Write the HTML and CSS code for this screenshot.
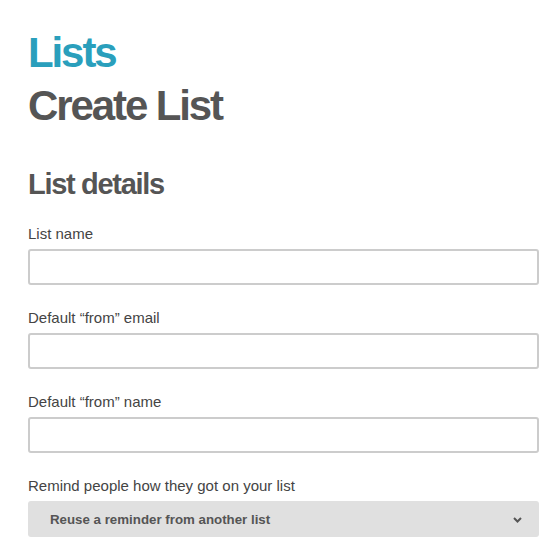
FILE: index.html
```html
<!DOCTYPE html>
<html>
<head>
<meta charset="utf-8">
<link rel="stylesheet" href="styles.css">
</head>
<body>
<main class="page">
  <header class="titles">
    <h1 class="crumb">Lists</h1>
    <h1 class="title">Create List</h1>
  </header>
  <h2 class="section">List details</h2>
  <form class="form">
    <div class="field">
      <label class="label">List name</label>
      <input class="input" type="text">
    </div>
    <div class="field">
      <label class="label">Default “from” email</label>
      <input class="input" type="text">
    </div>
    <div class="field">
      <label class="label">Default “from” name</label>
      <input class="input" type="text">
    </div>
    <div class="field">
      <label class="label">Remind people how they got on your list</label>
      <div class="select">
        <span class="select-text">Reuse a reminder from another list</span>
        <svg class="chev" width="9" height="6" viewBox="0 0 9 6"><path d="M1 1 L4.5 4.5 L8 1" fill="none" stroke="#555" stroke-width="2"/></svg>
      </div>
    </div>
  </form>
</main>
</body>
</html>
```

FILE: styles.css
```css
html, body {
  margin: 0;
  padding: 0;
  background: #fff;
}
body {
  font-family: "Liberation Sans", Arial, sans-serif;
  color: #444;
}
.page {
  padding: 26px 15px 0 28px;
}
.titles {
  display: flex;
  flex-direction: column;
}
.crumb, .title {
  margin: 0;
  font-size: 42px;
  line-height: 53px;
  font-weight: bold;
  letter-spacing: -2.1px;
}
.crumb { color: #2a9fbc; }
.title { color: #555; }
.section {
  margin: 34px 0 0;
  font-size: 29px;
  line-height: 36px;
  font-weight: bold;
  color: #555;
  letter-spacing: -1.3px;
}
.form {
  display: flex;
  flex-direction: column;
  gap: 24px;
  margin-top: 23px;
}
.field {
  display: flex;
  flex-direction: column;
  gap: 6px;
}
.label {
  font-size: 15px;
  line-height: 18px;
  color: #444;
}
.input {
  box-sizing: border-box;
  height: 36px;
  width: 100%;
  margin: 0;
  border: 2px solid #ccc;
  border-radius: 3px;
  background: #fff;
  padding: 0 8px;
}
.select {
  box-sizing: border-box;
  height: 36px;
  display: flex;
  align-items: center;
  justify-content: space-between;
  padding: 0 17px 0 22px;
  background: #e0e0e0;
  border-radius: 3px;
}
.select-text {
  font-size: 13.3px;
  font-weight: bold;
  color: #555;
}
.chev { display: block; margin-top: 1px; }
```
